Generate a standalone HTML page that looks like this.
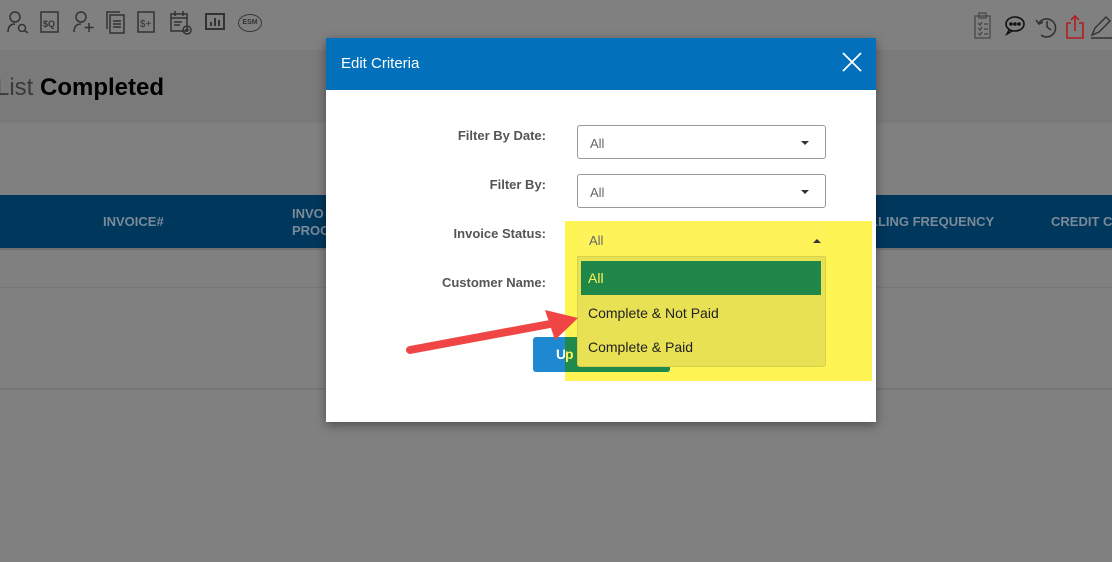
<!DOCTYPE html>
<html><head><style>
*{margin:0;padding:0;box-sizing:border-box}
html,body{background:#808080}
body{width:1112px;height:562px;overflow:hidden;font-family:"Liberation Sans",sans-serif;position:relative}
.a{position:absolute;white-space:nowrap}
.lbl{position:absolute;right:0;font-size:13px;font-weight:bold;color:#555;text-align:right;width:200px}
.sel{position:absolute;left:577px;width:249px;height:34px;border:1px solid #999;border-radius:3px;background:#fff;font-size:13px;color:#666;padding:10px 12px}
.sel:after{content:"";position:absolute;right:16px;top:15px;border:4px solid transparent;border-top:4px solid #333;border-bottom:0}
svg.i{position:absolute;top:10px}
</style></head><body>
<div class="a" style="left:0;top:0;width:1112px;height:50px;background:#808080"></div>
<svg class="i" style="left:6px" width="24" height="24" fill="none" stroke="#333" stroke-width="1.5"><circle cx="9" cy="7" r="5"/><path d="M2 22c0-6 3-8 7-8"/><circle cx="16" cy="18" r="3.5"/><path d="M18.5 20.5L22 23"/></svg>
<svg class="i" style="left:39px" width="24" height="24" fill="none" stroke="#333" stroke-width="1.5"><rect x="2" y="2" width="17" height="20"/><text x="4" y="17" font-size="9" fill="#333" stroke="none" font-weight="bold">$Q</text></svg>
<svg class="i" style="left:72px" width="24" height="24" fill="none" stroke="#333" stroke-width="1.5"><circle cx="9" cy="7" r="5"/><path d="M2 22c0-6 3-8 7-8M17 13v9M12.5 17.5h9"/></svg>
<svg class="i" style="left:104px" width="24" height="24" fill="none" stroke="#333" stroke-width="1.5"><rect x="6" y="5" width="14" height="18"/><path d="M3 19V2h13M9 11h8M9 14h8M9 17h8"/></svg>
<svg class="i" style="left:136px" width="24" height="24" fill="none" stroke="#333" stroke-width="1.5"><rect x="2" y="2" width="16" height="20"/><text x="4" y="17" font-size="10" fill="#333" stroke="none">$+</text></svg>
<svg class="i" style="left:169px" width="24" height="26" fill="none" stroke="#333" stroke-width="1.5"><rect x="2" y="4" width="16" height="17"/><path d="M6 1v5M14 1v5M2 8h16M5 12h8M5 15h6"/><circle cx="18" cy="20" r="4"/><path d="M18 18v4M16 20h4"/></svg>
<svg class="i" style="left:204px" width="24" height="24" fill="none" stroke="#333" stroke-width="2"><rect x="2" y="4" width="18" height="15"/><path d="M7 16v-4M11 16v-8M15 16v-6"/></svg>
<div class="a" style="left:238px;top:14px;width:24px;height:18px;border:1px solid #3a3a3a;border-radius:50%;font-size:7px;font-weight:bold;color:#333;text-align:center;line-height:16px">ESM</div>
<svg class="i" style="left:973px;top:12px" width="20" height="28" fill="none" stroke="#444" stroke-width="1.2"><rect x="2" y="4" width="15" height="22"/><rect x="6" y="1" width="7" height="5"/><path d="M5 11l2 2 2-3M11 12h4M5 16l2 2 2-3M11 17h4M5 21l2 2 2-3M11 22h4"/></svg>
<svg class="i" style="left:1004px;top:15px" width="24" height="22" fill="none" stroke="#111" stroke-width="1.6"><ellipse cx="11" cy="9" rx="9" ry="7"/><path d="M5 15l-2 4 5-3"/><circle cx="7" cy="9" r="1" fill="#111"/><circle cx="11" cy="9" r="1" fill="#111"/><circle cx="15" cy="9" r="1" fill="#111"/></svg>
<svg class="i" style="left:1034px;top:14px" width="26" height="26" fill="none" stroke="#333" stroke-width="1.6"><path d="M5 9a9 9 0 1 1 2 12"/><path d="M2 6l3 4 4-2M13 7v6l4 3"/></svg>
<svg class="i" style="left:1065px;top:14px" width="22" height="26" fill="none" stroke="#b02020" stroke-width="1.6"><path d="M6 9H2v15h16V9h-4M10 2v15M6 6l4-4 4 4"/></svg>
<svg class="i" style="left:1090px;top:15px" width="22" height="24" fill="none" stroke="#333" stroke-width="1.4"><path d="M2 20l3-7 11-11 4 4-11 11zM1 23h21"/></svg>
<div class="a" style="left:0;top:50px;width:1112px;height:73px;background:#7a7a7a"></div>
<div class="a" style="left:-4px;top:74px;font-size:24px;color:#3a3a3a">List <b style="color:#000">Completed</b></div>
<div class="a" style="left:0;top:195px;width:1112px;height:53px;background:#00375c"></div>
<div class="a" style="left:103px;top:214px;font-size:13px;font-weight:bold;color:#7b8a99">INVOICE#</div>
<div class="a" style="left:292px;top:205px;font-size:13px;font-weight:bold;color:#7b8a99;line-height:17px">INVO<br>PROC</div>
<div class="a" style="left:870px;top:214px;font-size:13px;font-weight:bold;color:#7b8a99">LLING FREQUENCY</div>
<div class="a" style="left:1051px;top:214px;font-size:13px;font-weight:bold;color:#7b8a99">CREDIT CA</div>
<div class="a" style="left:0;top:248px;width:1112px;height:2px;background:#707070"></div>
<div class="a" style="left:0;top:287px;width:1112px;height:1px;background:#777"></div>
<div class="a" style="left:0;top:388px;width:1112px;height:2px;background:#777"></div>

<div class="a" style="left:326px;top:38px;width:550px;height:384px;background:#fff;box-shadow:0 3px 10px rgba(0,0,0,.4)"></div>
<div class="a" style="left:326px;top:38px;width:550px;height:52px;background:#0270ba"></div>
<div class="a" style="left:341px;top:55px;font-size:15px;color:#fff">Edit Criteria</div>
<svg class="a" style="left:841px;top:51px" width="22" height="22"><path d="M2 2L20 20M20 2L2 20" stroke="#fff" stroke-width="1.8"/></svg>
<div style="position:absolute;left:346px;top:128px;width:200px;height:200px">
<div class="lbl" style="top:0">Filter By Date:</div>
<div class="lbl" style="top:49px">Filter By:</div>
<div class="lbl" style="top:98px">Invoice Status:</div>
<div class="lbl" style="top:147px">Customer Name:</div>
</div>
<div class="sel" style="top:125px">All</div>
<div class="sel" style="top:174px">All</div>
<div class="a" style="left:565px;top:221px;width:307px;height:160px;background:rgba(254,244,60,.88)"></div>
<div class="a" style="left:533px;top:337px;width:137px;height:35px;background:#1e88d0;border-radius:3px;color:#fff;font-size:14px;font-weight:bold;padding:9px 0 0 23px;overflow:hidden">Update<div class="a" style="left:32px;top:0;width:105px;height:35px;background:#1f8a4c"></div></div>
<div class="a" style="left:565px;top:337px;width:12px;height:35px;color:#fef45a;font-size:14px;font-weight:bold;padding-top:9px">p</div>
<div class="a" style="left:577px;top:223px;width:249px;height:144px;background:#e9e154;border:1px solid #d8d04a;border-radius:3px"></div>
<div class="a" style="left:577px;top:223px;width:249px;height:34px;background:#fef45a;border-bottom:1px solid #d8d04a;font-size:13px;color:#666;padding:10px 12px">All</div>
<div class="a" style="left:813px;top:239px;border:4px solid transparent;border-bottom:4px solid #333;border-top:0"></div>
<div class="a" style="left:581px;top:261px;width:240px;height:34px;background:#20874a;color:#fef45a;font-size:14px;padding:9px 7px">All</div>
<div class="a" style="left:588px;top:305px;font-size:14px;color:#222">Complete &amp; Not Paid</div>
<div class="a" style="left:588px;top:339px;font-size:14px;color:#222">Complete &amp; Paid</div>
<svg class="a" style="left:400px;top:300px" width="190" height="60"><path d="M10 50L150 24" stroke="#f04545" stroke-width="8" stroke-linecap="round"/><path d="M145 10L178 18L155 40Z" fill="#f04545"/></svg>
</body></html>
